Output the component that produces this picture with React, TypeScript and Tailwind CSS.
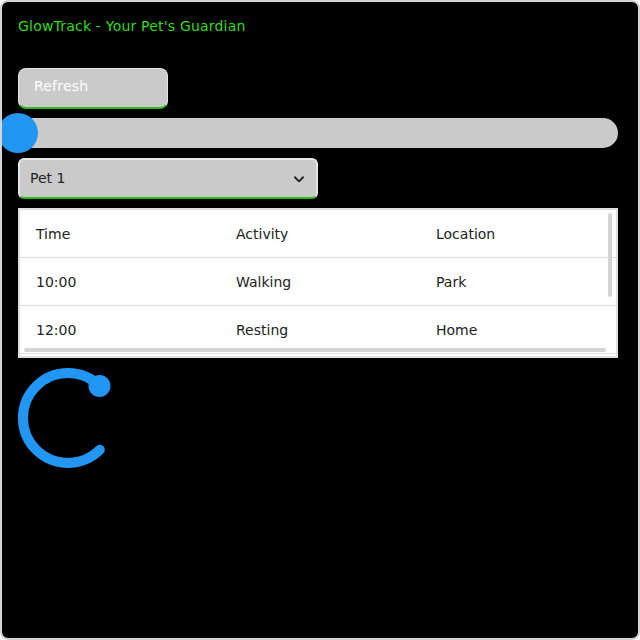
import React from "react";

export default function App() {
  const rows = [
    ["10:00", "Walking", "Park"],
    ["12:00", "Resting", "Home"],
  ];
  return (
    <div className="w-[640px] h-[640px] bg-black border-2 border-[#d4d4d4] rounded-[8px] overflow-hidden flex flex-col font-['DejaVu_Sans',sans-serif]">
      <div className="pt-[15px] pl-[16px] text-[14px] leading-[19px] tracking-[0.2px] text-[#33dd11]">GlowTrack - Your Pet's Guardian</div>
      <div className="mt-[32px] ml-[16px] w-[150px] h-[41px] rounded-[8px] bg-[#cacaca] border border-[#e6e6e6] border-b-[2px] border-b-[#2cc014] flex items-center pl-[15px] pb-[3px] text-white text-[14px] tracking-[0.2px]">
        Refresh
      </div>
      <div className="relative mt-[4px] h-[40px] w-[636px] flex items-center">
        <div className="w-[616px] h-[30px] rounded-full bg-[#cacaca]" />
        <div className="absolute left-[-4px] top-[0px] w-[40px] h-[40px] rounded-full bg-[#2196f3]" />
      </div>
      <div className="mt-[5px] ml-[16px] w-[300px] h-[41px] rounded-[6px] bg-[#cacaca] border-2 border-[#e6e6e6] border-b-[#2cc014] flex items-center justify-between pl-[10px] pr-[10px] text-[14px] text-[#222]">
        <span>Pet 1</span>
        <svg width="14" height="14" viewBox="0 0 24 24" fill="none" stroke="#222" strokeWidth="3.2" strokeLinecap="round" strokeLinejoin="round"><path d="M5 9l7 7 7-7" /></svg>
      </div>
      <div className="relative mt-[9px] ml-[16px] w-[600px] h-[150px] bg-white border-2 border-[#dedede] overflow-hidden">
        <div className="flex flex-col">
          <div className="flex h-[48px] items-center pt-[2px] border-b border-[#dddddd] text-[14px] text-[#222]">
            <div className="w-[200px] pl-[16px] shrink-0">Time</div>
            <div className="w-[200px] pl-[16px] shrink-0">Activity</div>
            <div className="w-[200px] pl-[16px] shrink-0">Location</div>
          </div>
          {rows.map((r, i) => (
            <div key={i} className="flex h-[48px] items-center pt-[2px] border-b border-[#dddddd] text-[14px] text-[#222]">
              <div className="w-[200px] pl-[16px] shrink-0">{r[0]}</div>
              <div className="w-[200px] pl-[16px] shrink-0">{r[1]}</div>
              <div className="w-[200px] pl-[16px] shrink-0">{r[2]}</div>
            </div>
          ))}
        </div>
        <div className="absolute right-[4px] top-[3px] w-[4px] h-[84px] rounded-full bg-[#d4d4d4]" />
        <div className="absolute left-[4px] bottom-[4px] w-[582px] h-[4px] rounded-full bg-[#d4d4d4]" />
      </div>
      <div className="mt-[10px] ml-[16px]">
        <svg width="100" height="100" viewBox="0 0 100 100">
          <path d="M81.8 18.2 A45 45 0 1 0 81.8 81.8" fill="none" stroke="#2196f3" strokeWidth="10" strokeLinecap="round" />
          <circle cx="81.5" cy="18" r="11" fill="#2196f3" />
        </svg>
      </div>
    </div>
  );
}
